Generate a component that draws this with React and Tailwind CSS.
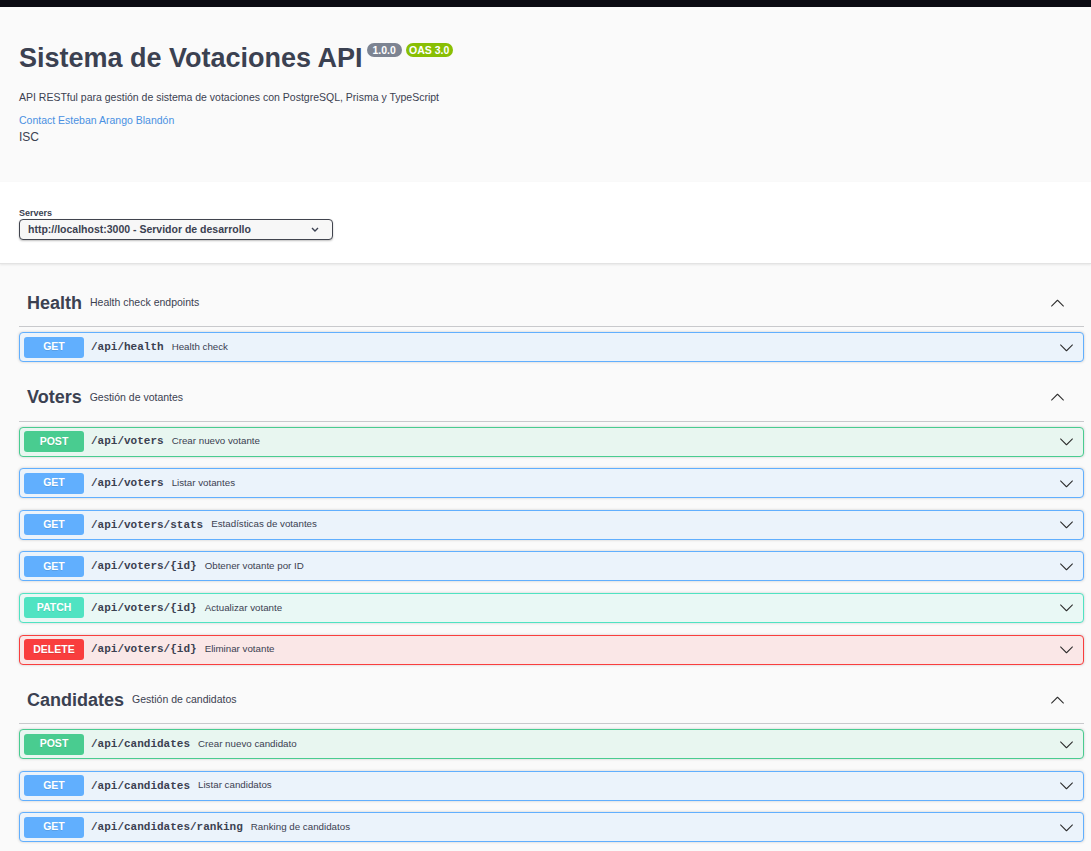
const SANS = { fontFamily: '"Liberation Sans", Arial, sans-serif' };

const METHOD_STYLES = {
  GET: { row: "bg-[#ebf3fb] border-[#61affe]", badge: "bg-[#61affe]" },
  POST: { row: "bg-[#e8f6f0] border-[#49cc90]", badge: "bg-[#49cc90]" },
  PATCH: { row: "bg-[#e9f8f5] border-[#50e3c2]", badge: "bg-[#50e3c2]" },
  DELETE: { row: "bg-[#fae7e7] border-[#f93e3e]", badge: "bg-[#f93e3e]" },
};

const TAGS = [
  {
    name: "Health",
    description: "Health check endpoints",
    ops: [{ method: "GET", path: "/api/health", summary: "Health check" }],
  },
  {
    name: "Voters",
    description: "Gestión de votantes",
    ops: [
      { method: "POST", path: "/api/voters", summary: "Crear nuevo votante" },
      { method: "GET", path: "/api/voters", summary: "Listar votantes" },
      { method: "GET", path: "/api/voters/stats", summary: "Estadísticas de votantes" },
      { method: "GET", path: "/api/voters/{id}", summary: "Obtener votante por ID" },
      { method: "PATCH", path: "/api/voters/{id}", summary: "Actualizar votante" },
      { method: "DELETE", path: "/api/voters/{id}", summary: "Eliminar votante" },
    ],
  },
  {
    name: "Candidates",
    description: "Gestión de candidatos",
    ops: [
      { method: "POST", path: "/api/candidates", summary: "Crear nuevo candidato" },
      { method: "GET", path: "/api/candidates", summary: "Listar candidatos" },
      { method: "GET", path: "/api/candidates/ranking", summary: "Ranking de candidatos" },
    ],
  },
];

// swagger-ui style arrow
const Arrow = ({ up = false }) => (
  <svg
    width="15"
    height="15"
    viewBox="0 0 20 20"
    className={up ? "rotate-180 text-[#2b2b2b]" : "text-[#2b2b2b]"}
    fill="currentColor"
  >
    <path d="M17.418 6.109c.272-.268.709-.268.979 0s.271.701 0 .969l-7.908 7.83c-.27.268-.707.268-.979 0l-7.908-7.83c-.27-.268-.27-.701 0-.969.271-.268.709-.268.979 0L10 13.25l7.418-7.141z" />
  </svg>
);

const Operation = ({ method, path, summary }) => {
  const style = METHOD_STYLES[method];
  return (
    <div
      className={`h-[30px] mb-[11.6px] flex items-center pl-[4px] pr-[9px] border rounded-[4px] shadow-[0_0_3px_rgba(0,0,0,0.19)] ${style.row}`}
    >
      <span
        className={`w-[60px] h-[21px] rounded-[3px] flex items-center justify-center text-white font-bold text-[10.5px] [text-shadow:0_1px_0_rgba(0,0,0,0.1)] ${style.badge}`}
      >
        {method}
      </span>
      <span
        className="ml-[7px] text-[11px] font-semibold text-[#3b4151]"
        style={{ fontFamily: '"Liberation Mono", "DejaVu Sans Mono", monospace' }}
      >
        {path}
      </span>
      <span className="ml-[8px] text-[9.75px] text-[#3b4151] flex-1">{summary}</span>
      <Arrow />
    </div>
  );
};

const TagSection = ({ name, description, ops }) => (
  <div className="mb-[1px]">
    <div className="h-[48px] flex items-center pt-[1px] pl-[8px] pr-[19px] border-b border-[#c8c9cc]">
      <span className="text-[18px] font-bold text-[#3b4151]">{name}</span>
      <span className="ml-[8px] text-[10.5px] text-[#3b4151] flex-1">{description}</span>
      <Arrow up />
    </div>
    <div className="mt-[5px]">
      {ops.map((op, i) => (
        <Operation key={i} {...op} />
      ))}
    </div>
  </div>
);

export default function App() {
  return (
    <div className="min-h-screen bg-[#fafafa] text-[#3b4151]" style={SANS}>
      <div className="h-[7px] bg-[#0b0b12]" />

      <div className="pl-[19px] pt-[38px] h-[175px]">
        <div className="flex items-start">
          <h1 className="text-[27px] leading-[27px] font-bold text-[#3b4151]">Sistema de Votaciones API</h1>
          <span className="ml-[4px] -mt-[2px] w-[35px] h-[14px] rounded-full bg-[#7d8492] text-white text-[10.5px] font-bold leading-[14px] text-center">
            1.0.0
          </span>
          <span className="ml-[4px] -mt-[2px] w-[47px] h-[14px] rounded-full bg-[#89bf04] text-white text-[10.5px] font-bold leading-[14px] text-center">
            OAS 3.0
          </span>
        </div>
        <p className="mt-[18px] text-[10.5px] leading-[14px]">
          API RESTful para gestión de sistema de votaciones con PostgreSQL, Prisma y TypeScript
        </p>
        <a className="block mt-[9px] text-[10.5px] leading-[14px] text-[#4990e2]">Contact Esteban Arango Blandón</a>
        <div className="mt-[3px] text-[12px] leading-[14px]">ISC</div>
      </div>

      <div className="bg-white h-[82px] pl-[19px] pt-[26px] border-b border-[#e3e3e3] shadow-[0_1px_2px_0_rgba(0,0,0,0.08)]">
        <div className="text-[9px] leading-[11px] font-bold text-[#3b4151]">Servers</div>
        <div className="w-[314px] h-[21px] flex items-center pl-[8px] pr-[13px] bg-[#f7f7f7] border-[1.5px] border-[#41444e] rounded-[4px] shadow-[0_1px_2px_0_rgba(0,0,0,0.25)]">
          <span className="flex-1 text-[10.5px] font-bold text-[#3b4151]">
            http://localhost:3000 - Servidor de desarrollo
          </span>
          <svg width="8" height="5" viewBox="0 0 8 5" fill="none" stroke="#3b4151" strokeWidth="1.4">
            <path d="M1 1l3 3 3-3" />
          </svg>
        </div>
      </div>

      <div className="pl-[19px] pr-[7px] pt-[15px]">
        {TAGS.map((tag) => (
          <TagSection key={tag.name} {...tag} />
        ))}
      </div>
    </div>
  );
}
